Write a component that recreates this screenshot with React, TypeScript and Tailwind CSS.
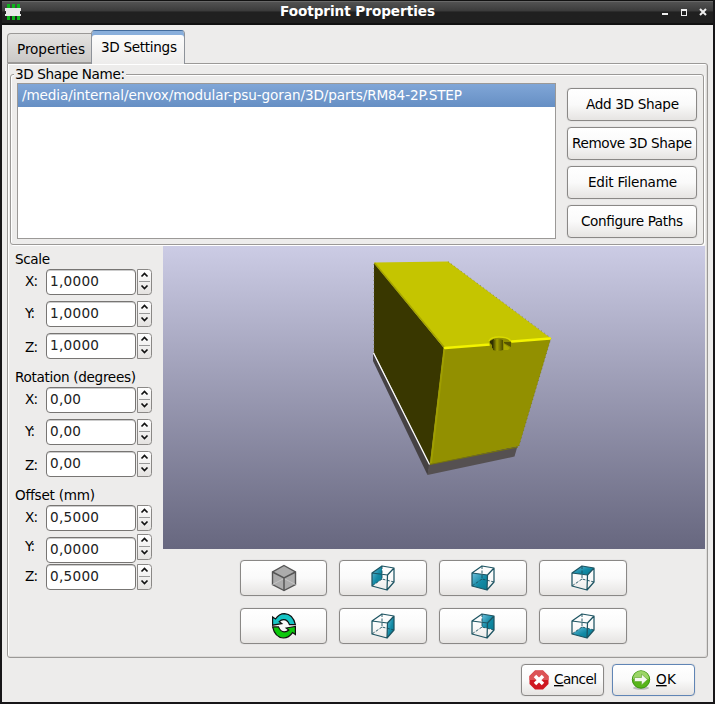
import React from "react";

const FACE = "font-['DejaVu_Sans',sans-serif]";
const BTN =
  "flex items-center justify-center rounded-[4px] border border-[#8a8886] bg-linear-to-b from-white via-[#fafafa] via-50% to-[#e6e4e2] shadow-[0_0_1px_#aaa]";

function Label({ children, w, className = "" }: { children: React.ReactNode; w: number; className?: string }) {
  return (
    <svg width={w} height="18" className={`block shrink-0 overflow-visible ${className}`}>
      <text x="0" y="14" textLength={w} fontSize="13.6" fill="currentColor">
        {children}
      </text>
    </svg>
  );
}

function Chip() {
  return (
    <svg width="16" height="16" viewBox="0 0 16 16" shapeRendering="crispEdges">
      <path d="M2 0h3v16H2zM7 0h3v16H7zM12 0h3v16h-3z" fill="#0eb51c" />
      <path d="M0 4h16v3h-1v3h1v2H0v-2h1V7H0z" fill="#e9e9e9" />
    </svg>
  );
}

function Spin({ axis, value, gap, labelTop = 4, fieldTop = 0 }: { axis: string; value: string; gap: string; labelTop?: number; fieldTop?: number }) {
  return (
    <div className={`flex items-start ${gap}`}>
      <div className="w-[31px] pl-[10px]" style={{ paddingTop: labelTop }}>
        <Label w={axis === "Y" ? 10 : 13}>{axis}:</Label>
      </div>
      <div
        className="flex h-[26px] w-[90px] items-center rounded-[4px] border border-[#777573] bg-white pl-[3px] shadow-[inset_0_1px_0_#ccc]"
        style={{ marginTop: fieldTop + 1 }}
      >
        <Label w={value.length === 6 ? 49 : 31} className="-mt-[2px] text-[#222]">
          {value}
        </Label>
      </div>
      <svg width="15" height="26" viewBox="0 0 15 26" className="ml-px mt-px">
        <defs>
          <linearGradient id="stepper" x1="0" y1="0" x2="0" y2="1">
            <stop offset="0" stopColor="#fff" />
            <stop offset="1" stopColor="#e4e2e0" />
          </linearGradient>
        </defs>
        <path d="M.5.5h11q3 0 3 3v19q0 3-3 3H.5z" fill="url(#stepper)" stroke="#8a8886" />
        <path d="M2 12.5h11" stroke="#999" />
        <path d="m4.500 7.500 3-3 3 3M4.500 16.500l3 3 3-3" fill="none" stroke="#111" strokeWidth="1.700" />
      </svg>
    </div>
  );
}

type Face = "left" | "right" | "front" | "back" | "top" | "bottom";
const FACES: Record<Face, string> = {
  left: "M2 9 12 2v13L2 22z",
  right: "M17.5 11 24 4v14l-7 8z",
  front: "M2 9 17.5 11 17 26 2 22z",
  back: "M12 2 24 4v14l-12-3z",
  top: "M2 9 12 2 24 4 17.5 11z",
  bottom: "M2 22 12 15 24 18l-7 8z",
};

function WireCube({ face }: { face: Face }) {
  return (
    <svg width="26" height="28" viewBox="0 0 26 28">
      <defs>
        <linearGradient id={`g-${face}`} x1="0" y1="0" x2="1" y2="1">
          <stop offset="0" stopColor="#6fbfdc" />
          <stop offset=".55" stopColor="#128aa5" />
          <stop offset="1" stopColor="#087b91" />
        </linearGradient>
      </defs>
      <path d={FACES[face]} fill={`url(#g-${face})`} />
      <path d="M12 2v13l12 3M12 15 2 22" fill="none" stroke="#174c5b" strokeWidth=".9" strokeDasharray="3 1.5" />
      <path d="M2 9 12 2 24 4v14l-7 8L2 22zM2 9l15.5 2L24 4M17.5 11 17 26" fill="none" stroke="#1d5462" strokeWidth="1.25" strokeLinejoin="round" />
    </svg>
  );
}

function SolidCube() {
  return (
    <svg width="26" height="28" viewBox="0 0 26 28">
      <path d="M13 1.5 24.5 8v12.5L13 26.5 1.5 20.5V8z" fill="#acacac" stroke="#555" strokeWidth="1.4" />
      <path d="M1.5 20.5 13 14.5l11.5 6" fill="none" stroke="#c5c5c5" />
      <path d="M1.5 8 13 14l11.5-6M13 14v12.5" fill="none" stroke="#555" strokeWidth="1.5" />
    </svg>
  );
}

const ARROW = "M.6 4 3.500 6Q7 .6 12.500 .6 21 1 23.400 11.700H17.500Q15.500 6.700 11.700 6.700 9 6.700 7.200 8.600L9.800 10.600.6 12.200z";

function Refresh() {
  return (
    <svg width="26" height="28" viewBox="-1 -1 26 28" stroke="#101010" strokeWidth="1.2">
      <path d={ARROW} fill="#16c5c5" />
      <path d={ARROW} fill="#0cc80c" transform="rotate(180 12 12.8)" />
    </svg>
  );
}

function Viewport() {
  return (
    <svg width="542" height="303" viewBox="163 246 542 303" className="shrink-0 bg-linear-to-b from-[#cccce5] to-[#67677f]">
      <defs>
        <linearGradient id="pin">
          <stop offset="0" stopColor="#3b3a00" />
          <stop offset=".4" stopColor="#a3a000" />
          <stop offset="1" stopColor="#4d4b00" />
        </linearGradient>
      </defs>
      <path d="M373 353 430 464 427.500 475 373 361z" fill="#454143" />
      <path d="M429 464 517.500 446 514.500 456.500 427.500 475z" fill="#555051" />
      <path d="M374 263 444 348 430 464.500 374 353z" fill="#393700" />
      <path d="M374 262.500 448 261.500 551 338.500 444 348z" fill="#c5c500" />
      <path d="M444 348 551 338 519 446 430 464.500z" fill="#929000" />
      <path d="M374.500 263 444 347" stroke="#a5a400" strokeWidth="1.500" />
      <path d="M444.500 348 431 463" stroke="#a09e00" strokeWidth="2" />
      <path d="M373.500 353 429.500 464.500" stroke="#fff" strokeWidth="1.300" />
      <path d="M430 464.500 518 447" stroke="#77740b" />
      <path d="M374 353V263M448 261.500 551 338 519 446" fill="none" stroke="#686620" strokeWidth=".6" strokeDasharray="1 3" />
      <path d="M445 348 490 344.500M512 341.500 550 338.500" stroke="#f3f300" strokeWidth="2.500" strokeLinecap="round" />
      <path d="M489 341q2-4 10-4 9 0 12 4v5l-2 3-8 2h-10l-1-4z" fill="#918f00" />
      <path d="M489 341q2-4 10-4 9 0 12 4" fill="none" stroke="#dada00" strokeWidth="1.500" />
      <path d="m490 341 4-2v10l-2-1v-3l-2-2z" fill="#302f00" />
      <path d="M493 340q5-2 10 0v10q-5 2-10 0z" fill="url(#pin)" />
      <path d="m504 342 7 0v5l-7-4z" fill="#555300" />
      <path d="m504 344 6 4-2 2h-4z" fill="#aaa800" />
    </svg>
  );
}

function CancelIcon() {
  return (
    <svg width="20" height="20" viewBox="0 0 20 20">
      <path d="M6 .5h8L19.500 6v8L14 19.500H6L.5 14V6z" fill="#cf1720" />
      <path d="M6 .5h8L19.500 6v4H.5V6z" fill="#dc5356" />
      <path d="m6 6 8 8m0-8-8 8" stroke="#fff" strokeWidth="3.500" />
    </svg>
  );
}

function OkIcon() {
  return (
    <svg width="20" height="20" viewBox="0 0 20 20">
      <ellipse cx="10" cy="18" rx="8" ry="1.800" fill="#bbb" />
      <circle cx="10" cy="9.500" r="8.700" fill="#58b51a" stroke="#3b9410" />
      <path d="M2 9a8 8 0 0 1 16 0q-8-2-16 0z" fill="#9bd567" />
      <path d="M3.500 7.500h7V4l6 5.500-6 5.500v-3.500h-7z" fill="#f4f8f0" stroke="#6cab3d" strokeWidth=".7" />
    </svg>
  );
}

const ACTIONS: [string, number][] = [
  ["Add 3D Shape", 93],
  ["Remove 3D Shape", 120],
  ["Edit Filename", 89],
  ["Configure Paths", 102],
];

export default function App() {
  const tools: React.ReactNode[] = [
    <SolidCube />,
    <WireCube face="left" />,
    <WireCube face="front" />,
    <WireCube face="top" />,
    <Refresh />,
    <WireCube face="right" />,
    <WireCube face="back" />,
    <WireCube face="bottom" />,
  ];
  return (
    <div className={`flex h-[704px] w-[715px] flex-col overflow-hidden border-x-2 border-b-2 border-[#171618] bg-[#edeceb] text-black ${FACE}`}>
      <header className="flex h-[25px] shrink-0 items-center border-t border-b-2 border-t-[#111] border-b-[#111] bg-linear-to-b from-[#555] via-[#3b3b3b] via-45% to-[#202020] to-50% text-white shadow-[inset_0_1px_#686868]">
        <div className="ml-[3px]"><Chip /></div>
        <div className="flex flex-1 justify-center pl-[31px]">
          <Label w={155} className="-mt-[2px] font-bold">Footprint Properties</Label>
        </div>
        <svg width="51" height="10" viewBox="0 0 51 10" fill="none" stroke="#eee" strokeWidth="2" shapeRendering="crispEdges">
          <path d="M0 7h6" />
          <path d="M19.500 3v5h5V3M19 3h6" strokeWidth="1" />
          <path d="M19 3h6" />
          <path d="m38 2 6 6m0-6-6 6" shapeRendering="auto" />
        </svg>
      </header>

      <nav className="relative z-10 ml-[5px] mt-[5px] flex h-[34px] items-end">
        <div className="mb-px flex h-[30px] w-[84px] justify-center rounded-tl-[4px] border border-r-0 border-[#9b9997] bg-linear-to-b from-[#e4e3e1] to-[#cac8c6] pl-[2px] pt-[6px]">
          <Label w={68}>Properties</Label>
        </div>
        <div className="flex h-[34px] w-[94px] justify-center rounded-t-[4px] border-x border-t border-x-[#8d9299] border-t-[#426b9c] bg-linear-to-b from-white to-[#edeceb] pl-[2px] pt-[7px] shadow-[inset_0_4px_#88aedb]">
          <Label w={76}>3D Settings</Label>
        </div>
      </nav>

      <main className="-mt-px ml-[5px] flex h-[595px] w-[701px] shrink-0 flex-col rounded-b-[3px] rounded-tr-[3px] border border-[#9b9997] px-[2px] shadow-[inset_1px_1px_#fff,inset_-1px_-1px_#dddbd9]">
        <fieldset className="relative mt-[10px] flex h-[171px] w-[694px] rounded-[3px] border border-[#9b9997] pl-[6px] shadow-[inset_1px_1px_#fff,1px_1px_#fff]">
          <div className="absolute -top-[10px] left-[3px] bg-[#edeceb] px-px">
            <Label w={110}>3D Shape Name:</Label>
          </div>
          <div className="mt-[8px] h-[156px] w-[539px] border border-[#9b9997] bg-white">
            <div className="flex h-[23px] items-center bg-linear-to-b from-[#80a6d7] to-[#668fc4] pl-[4px] text-white">
              <Label w={440} className="-mt-px">/media/internal/envox/modular-psu-goran/3D/parts/RM84-2P.STEP</Label>
            </div>
          </div>
          <div className="ml-[11px] mt-[13px] flex flex-col gap-[6px]">
            {ACTIONS.map(([t, w]) => (
              <button key={t} className={`${BTN} h-[33px] w-[130px]`}>
                <Label w={w} className="-mt-[2px]">{t}</Label>
              </button>
            ))}
          </div>
        </fieldset>

        <div className="flex">
          <section className="w-[153px] shrink-0 pl-[5px] pt-[5px]">
            <Label w={35}>Scale</Label>
            <Spin axis="X" value="1,0000" gap="" />
            <Spin axis="Y" value="1,0000" gap="mt-[5px]" />
            <Spin axis="Z" value="1,0000" gap="mt-[5px]" labelTop={6} />
            <div className="mt-[9px]"><Label w={121}>Rotation (degrees)</Label></div>
            <Spin axis="X" value="0,00" gap="" />
            <Spin axis="Y" value="0,00" gap="mt-[5px]" />
            <Spin axis="Z" value="0,00" gap="mt-[5px]" labelTop={6} />
            <div className="mt-[9px]"><Label w={80}>Offset (mm)</Label></div>
            <Spin axis="X" value="0,5000" gap="" />
            <Spin axis="Y" value="0,0000" gap="mt-[2px]" fieldTop={3} />
            <Spin axis="Z" value="0,5000" gap="" labelTop={4} />
          </section>
          <section className="flex flex-col pt-px">
            <Viewport />
            <div className="ml-[77px] mt-[11px] grid w-[388px] grid-cols-[87px_88px_88px_88px] gap-x-[12px] gap-y-[12px]">
              {tools.map((icon, i) => (
                <button key={i} className={`${BTN} h-[36px] w-full`}>{icon}</button>
              ))}
            </div>
          </section>
        </div>
      </main>

      <footer className="mt-[6px] flex justify-end gap-[8px] pr-[18px]">
        <button className={`${BTN} h-[32px] w-[83px] gap-[5px]`}>
          <CancelIcon />
          <Label w={43} className="-mt-[2px]"><tspan textDecoration="underline">C</tspan>ancel</Label>
        </button>
        <button className={`${BTN} h-[32px] w-[83px] gap-[5px] border-[#6085b5]`}>
          <OkIcon />
          <Label w={20} className="-mt-[2px]"><tspan textDecoration="underline">O</tspan>K</Label>
        </button>
      </footer>
    </div>
  );
}
